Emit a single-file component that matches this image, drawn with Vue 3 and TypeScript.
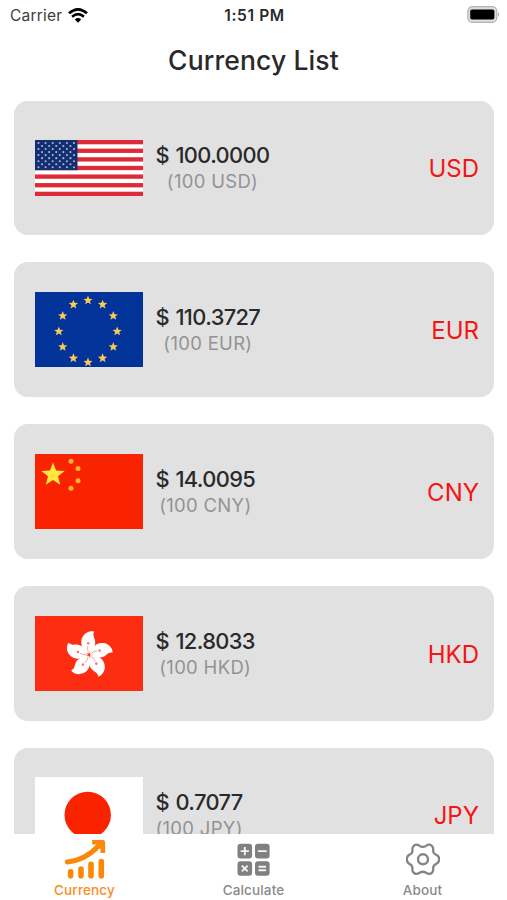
<script setup lang="ts">
interface Currency {
  code: string
  price: string
}

interface Point {
  x: number
  y: number
}

const currencies: Currency[] = [
  { code: 'USD', price: '100.0000' },
  { code: 'EUR', price: '110.3727' },
  { code: 'CNY', price: '14.0095' },
  { code: 'HKD', price: '12.8033' },
  { code: 'JPY', price: '0.7077' },
]

function starPoints(cx: number, cy: number, r: number): string {
  const points: string[] = []
  for (let i = 0; i < 10; i++) {
    const angle = (i * Math.PI) / 5 - Math.PI / 2
    const radius = i % 2 === 0 ? r : r * 0.43
    points.push(`${(cx + radius * Math.cos(angle)).toFixed(2)},${(cy + radius * Math.sin(angle)).toFixed(2)}`)
  }
  return points.join(' ')
}

const euStars: string[] = Array.from({ length: 12 }, (_, i) => {
  const angle = (i * Math.PI) / 6
  return starPoints(53 + 29.2 * Math.sin(angle), 39.4 - 31 * Math.cos(angle), 4.9)
})

const usStars: Point[] = []
for (let row = 0; row < 9; row++) {
  const count = row % 2 === 0 ? 6 : 5
  for (let col = 0; col < count; col++) {
    usStars.push({ x: 3.5 + col * 7.1 + (row % 2 === 0 ? 0 : 3.55), y: 3 + row * 3.03 })
  }
}

const chinaStars: Point[] = [
  { x: 36, y: 7.2 },
  { x: 43, y: 14.4 },
  { x: 43, y: 26.8 },
  { x: 36, y: 34.3 },
]

const petals: number[] = [0, 72, 144, 216, 288]
const gear =
  'M13.6 2.9 Q16.8 4.8 20 2.9 Q23.2 .6 25.6 2.6 Q27.8 4.4 27.1 7.5 Q27.3 10.9 30.4 11.8 Q33.2 13.2 33.2 16.3 Q33.2 19.4 30.4 20.8 Q27.3 21.7 27.1 25.1 Q27.8 28.2 25.6 30 Q23.2 32 20 29.7 Q16.8 27.8 13.6 29.7 Q10.4 32 8 30 Q5.8 28.2 6.5 25.1 Q6.3 21.7 3.2 20.8 Q.8 19.4 .8 16.3 Q.8 13.2 3.2 11.8 Q6.3 10.9 6.5 7.5 Q5.8 4.4 8 2.6 Q10.4 .6 13.6 2.9Z'
</script>

<template>
  <div class="screen">
    <header class="status">
      <div class="carrier">
        <span>Carrier</span>
        <svg width="20" height="15" viewBox="0 0 20 15">
          <g fill="none" stroke="#000" stroke-width="2.7">
            <path d="M1 5.3 Q10 -2.5 19 5.3" />
            <path d="M4.1 8.7 Q10 3.6 15.9 8.7" />
          </g>
          <path d="M6.8 11.4 Q10 8.7 13.2 11.4 L10 14.7Z" />
        </svg>
      </div>
      <span class="clock">1:51 PM</span>
      <div class="battery">
        <svg width="34" height="18" viewBox="0 0 34 18">
          <rect x="1.8" y=".7" width="29" height="15.6" rx="4.5" fill="#dedede" stroke="#b4b4b4" stroke-width="1.2" />
          <rect x="4.2" y="3.4" width="24.2" height="10.2" rx="1.8" />
          <path d="M32 6.2 Q34 8.5 32 10.8Z" fill="#999" />
        </svg>
      </div>
    </header>
    <h1 class="title">Currency List</h1>

    <main class="list">
      <article v-for="c in currencies" :key="c.code" class="card">
        <svg v-if="c.code === 'USD'" class="flag" width="108" height="56" viewBox="0 0 108 56">
          <rect width="108" height="56" fill="#fff" />
          <rect v-for="n in 7" :key="n" y="0" width="108" height="4.31" :transform="`translate(0 ${(n - 1) * 8.615})`" fill="#dd2b37" />
          <rect width="42.5" height="30.2" fill="#142f70" />
          <circle v-for="(s, i) in usStars" :key="i" :cx="s.x" :cy="s.y" r="1.05" fill="#a9b5dc" />
        </svg>
        <svg v-else-if="c.code === 'EUR'" class="flag" width="108" height="75" viewBox="0 0 108 75">
          <rect width="108" height="75" fill="#023399" />
          <polygon v-for="p in euStars" :key="p" :points="p" fill="#fbca55" />
        </svg>
        <svg v-else-if="c.code === 'CNY'" class="flag" width="108" height="75" viewBox="0 0 108 75">
          <rect width="108" height="75" fill="#f92300" />
          <polygon :points="starPoints(18, 20.7, 12.3)" fill="#ffe83b" />
          <circle v-for="(s, i) in chinaStars" :key="i" :cx="s.x" :cy="s.y" r="2.5" fill="#ffb52c" />
        </svg>
        <svg v-else-if="c.code === 'HKD'" class="flag" width="108" height="75" viewBox="0 0 108 75">
          <rect width="108" height="75" fill="#fc2d10" />
          <g v-for="a in petals" :key="a" :transform="`translate(54 38.8) rotate(${a})`">
            <path d="M-.3 -1 C-7 -5 -10 -12.5 -6 -18.6 C-3.3 -22.8 1.5 -24.4 5.2 -23.2 C3.8 -20.4 4.6 -18.3 5.7 -15.5 C7.3 -11 5.4 -5 -.3 -1Z" fill="#fff" />
            <path d="M-.2 -2 Q-2.5 -5 -1.2 -9" fill="none" stroke="#fc8b7c" stroke-width=".7" />
            <circle cx="-.8" cy="-11.5" r="1.3" fill="#fc7b6a" />
          </g>
        </svg>
        <svg v-else class="flag" width="108" height="75" viewBox="0 0 108 75">
          <rect width="108" height="75" fill="#fff" />
          <circle cx="52.7" cy="37.9" r="23.2" fill="#f92300" />
        </svg>
        <div class="amount">
          <span class="price">$ {{ c.price }}</span>
          <span class="unit">(100 {{ c.code }})</span>
        </div>
        <span class="code">{{ c.code }}</span>
      </article>
    </main>

    <nav class="tabs">
      <a class="tab active">
        <svg width="42" height="42" viewBox="0 0 42 42" fill="none" stroke="#fd8706" stroke-linecap="round" stroke-linejoin="round">
          <path d="M3.3 23.9 Q21 22.5 35.5 7" stroke-width="5" />
          <path d="M28.2 4.2 H38.8 V15" stroke-width="4.6" stroke-linecap="butt" />
          <path d="M30 4 L38.5 4 V13Z" fill="#fd8706" stroke="none" />
          <path d="M6.6 33.8 V37.7 M17 31 V37.7 M27 26.3 V37.7 M37.3 23.5 V37.7" stroke-width="5.6" />
        </svg>
        <span>Currency</span>
      </a>
      <a class="tab">
        <svg width="34" height="42" viewBox="0 0 34 42">
          <g fill="#808080">
            <rect x=".5" y="5.8" width="14.6" height="14.6" rx="3" />
            <rect x="18" y="5.8" width="14.6" height="14.6" rx="3" />
            <rect x=".5" y="23.2" width="14.6" height="14.6" rx="3" />
            <rect x="18" y="23.2" width="14.6" height="14.6" rx="3" />
          </g>
          <path d="M3.7 13.1 H11.9 M7.8 9 V17.2 M20.9 13.1 H29.7 M4.9 27.6 L10.7 33.4 M10.7 27.6 L4.9 33.4 M21.5 28.7 H29.1 M21.5 32.3 H29.1" fill="none" stroke="#f4f4f4" stroke-width="1.9" />
        </svg>
        <span>Calculate</span>
      </a>
      <a class="tab">
        <svg width="34" height="42" viewBox="0 -5 34 42" fill="none" stroke="#858585" stroke-width="2.3" stroke-linejoin="round">
          <path :d="gear" />
          <circle cx="17" cy="16.3" r="5" stroke-width="2.4" />
        </svg>
        <span>About</span>
      </a>
    </nav>
  </div>
</template>

<style>
body {
  background: #fff;
}
</style>

<style scoped>
.screen {
  width: 507px;
  height: 900px;
  overflow: hidden;
  display: flex;
  flex-direction: column;
  background: #fff;
  color: #29292b;
  font-family: Inter, 'Liberation Sans', sans-serif;
}
.status {
  flex: none;
  height: 30px;
  box-sizing: border-box;
  padding: 0 7px 0 10px;
  display: grid;
  grid-template-columns: 1fr auto 1fr;
  align-items: center;
  font-size: 15.5px;
}
.carrier {
  display: flex;
  align-items: center;
  gap: 6px;
  color: #3c3c3c;
  letter-spacing: 0.2px;
}
.clock {
  font-weight: 600;
  letter-spacing: 0.65px;
  padding-right: 1px;
}
.battery {
  display: flex;
  justify-content: flex-end;
}
.title {
  flex: none;
  margin: 0;
  height: 70.5px;
  line-height: 61px;
  text-align: center;
  font-size: 26.5px;
  font-weight: 500;
  letter-spacing: 0.12px;
}
.list {
  flex: 1;
  min-height: 0;
  overflow: hidden;
  padding: 0 13.5px 0 14px;
}
.card {
  box-sizing: border-box;
  height: 134.75px;
  margin-bottom: 27px;
  padding: 0 14.5px 0 20.5px;
  display: flex;
  align-items: center;
  border-radius: 14px;
  background: #e1e1e1;
}
.flag {
  flex: none;
}
.amount {
  margin-left: 13px;
  padding-top: 1px;
  display: flex;
  flex-direction: column;
  align-items: center;
  white-space: pre;
}
.price {
  font-size: 21.8px;
  line-height: 27px;
  font-weight: 500;
  letter-spacing: -0.6px;
  word-spacing: 1.2px;
}
.unit {
  font-size: 18.5px;
  line-height: 25px;
  letter-spacing: 0.3px;
  color: #939393;
}
.code {
  margin-left: auto;
  padding-top: 2px;
  font-size: 24px;
  color: #f51515;
}
.tabs {
  flex: none;
  height: 66px;
  display: grid;
  grid-template-columns: repeat(3, 1fr);
  background: #fff;
}
.tab {
  display: flex;
  flex-direction: column;
  align-items: center;
  padding-top: 4px;
  font-size: 13.5px;
  line-height: 21px;
  font-weight: 500;
  letter-spacing: 0.15px;
  color: #8a8a8a;
}
.tab.active {
  color: #fd8c1c;
}
</style>
